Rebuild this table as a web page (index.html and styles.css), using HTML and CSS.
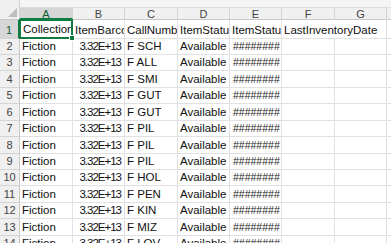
FILE: index.html
```html
<!DOCTYPE html>
<html>
<head>
<meta charset="utf-8">
<link rel="stylesheet" href="styles.css">
</head>
<body>
<div class="sheet">
  <div class="corner"><span class="tri"></span></div>
  <div class="strip"></div>
  <div class="colhead sel">A</div>
  <div class="colhead">B</div>
  <div class="colhead">C</div>
  <div class="colhead">D</div>
  <div class="colhead">E</div>
  <div class="colhead">F</div>
  <div class="colhead">G</div>
  <div class="colhead"></div>

  <div class="rowhead sel">1</div>
  <div class="cell active"><span class="clip">Collection</span><span class="handle"></span></div>
  <div class="cell">ItemBarcode</div>
  <div class="cell">CallNumber</div>
  <div class="cell">ItemStatus</div>
  <div class="cell">ItemStatusDate</div>
  <div class="cell spill">LastInventoryDate</div>
  <div class="cell"></div>
  <div class="cell"></div>

  <div class="rowhead">2</div><div class="cell">Fiction</div><div class="cell num">3.32E+13</div><div class="cell">F SCH</div><div class="cell">Available</div><div class="cell hash">########</div><div class="cell"></div><div class="cell"></div><div class="cell"></div>
  <div class="rowhead">3</div><div class="cell">Fiction</div><div class="cell num">3.32E+13</div><div class="cell">F ALL</div><div class="cell">Available</div><div class="cell hash">########</div><div class="cell"></div><div class="cell"></div><div class="cell"></div>
  <div class="rowhead">4</div><div class="cell">Fiction</div><div class="cell num">3.32E+13</div><div class="cell">F SMI</div><div class="cell">Available</div><div class="cell hash">########</div><div class="cell"></div><div class="cell"></div><div class="cell"></div>
  <div class="rowhead">5</div><div class="cell">Fiction</div><div class="cell num">3.32E+13</div><div class="cell">F GUT</div><div class="cell">Available</div><div class="cell hash">########</div><div class="cell"></div><div class="cell"></div><div class="cell"></div>
  <div class="rowhead">6</div><div class="cell">Fiction</div><div class="cell num">3.32E+13</div><div class="cell">F GUT</div><div class="cell">Available</div><div class="cell hash">########</div><div class="cell"></div><div class="cell"></div><div class="cell"></div>
  <div class="rowhead">7</div><div class="cell">Fiction</div><div class="cell num">3.32E+13</div><div class="cell">F PIL</div><div class="cell">Available</div><div class="cell hash">########</div><div class="cell"></div><div class="cell"></div><div class="cell"></div>
  <div class="rowhead">8</div><div class="cell">Fiction</div><div class="cell num">3.32E+13</div><div class="cell">F PIL</div><div class="cell">Available</div><div class="cell hash">########</div><div class="cell"></div><div class="cell"></div><div class="cell"></div>
  <div class="rowhead">9</div><div class="cell">Fiction</div><div class="cell num">3.32E+13</div><div class="cell">F PIL</div><div class="cell">Available</div><div class="cell hash">########</div><div class="cell"></div><div class="cell"></div><div class="cell"></div>
  <div class="rowhead">10</div><div class="cell">Fiction</div><div class="cell num">3.32E+13</div><div class="cell">F HOL</div><div class="cell">Available</div><div class="cell hash">########</div><div class="cell"></div><div class="cell"></div><div class="cell"></div>
  <div class="rowhead">11</div><div class="cell">Fiction</div><div class="cell num">3.32E+13</div><div class="cell">F PEN</div><div class="cell">Available</div><div class="cell hash">########</div><div class="cell"></div><div class="cell"></div><div class="cell"></div>
  <div class="rowhead">12</div><div class="cell">Fiction</div><div class="cell num">3.32E+13</div><div class="cell">F KIN</div><div class="cell">Available</div><div class="cell hash">########</div><div class="cell"></div><div class="cell"></div><div class="cell"></div>
  <div class="rowhead">13</div><div class="cell">Fiction</div><div class="cell num">3.32E+13</div><div class="cell">F MIZ</div><div class="cell">Available</div><div class="cell hash">########</div><div class="cell"></div><div class="cell"></div><div class="cell"></div>
  <div class="rowhead">14</div><div class="cell">Fiction</div><div class="cell num">3.32E+13</div><div class="cell">F LOV</div><div class="cell">Available</div><div class="cell hash">########</div><div class="cell"></div><div class="cell"></div><div class="cell"></div>
</div>
</body>
</html>
```

FILE: styles.css
```css
html, body {
  margin: 0;
  padding: 0;
  background: #ffffff;
  overflow: hidden;
}

.sheet {
  display: grid;
  grid-template-columns: 20px 53px 52px 53px 52px 52px 53px 52px 1fr;
  grid-template-rows: 8px 12px 18.5px repeat(13, 16.45px);
  width: 391px;
  height: 243px;
  overflow: hidden;
  font-family: "Liberation Sans", Arial, sans-serif;
  font-size: 11.5px;
  color: #111111;
}

.corner {
  grid-row: 1 / 3;
  grid-column: 1;
  background: #f0f0f0;
  border-right: 1px solid #d4d4d4;
  border-bottom: 1px solid #c8c8c8;
  position: relative;
}

.tri {
  position: absolute;
  right: 2px;
  bottom: 2px;
  width: 0;
  height: 0;
  border-left: 9px solid transparent;
  border-bottom: 9px solid #bdbdbd;
}

.strip {
  grid-column: 2 / -1;
  background: #f5f5f5;
  border-bottom: 1px solid #dcdcdc;
}

.colhead {
  background: #f0f0f0;
  border-right: 1px solid #d4d4d4;
  border-bottom: 1px solid #c8c8c8;
  box-sizing: border-box;
  text-align: center;
  font-size: 11px;
  line-height: 12px;
  color: #444444;
}

.colhead.sel {
  background: #d6d6d6;
  color: #0e5c2f;
  border-bottom: 2px solid #107c41;
}

.rowhead {
  background: #f0f0f0;
  border-right: 1px solid #c8c8c8;
  border-bottom: 1px solid #d4d4d4;
  box-sizing: border-box;
  font-size: 11px;
  line-height: 15px;
  color: #444444;
  display: flex;
  align-items: flex-end;
  justify-content: center;
}

.rowhead.sel {
  background: #d6d6d6;
  color: #0e5c2f;
  border-right: 2px solid #107c41;
}

.cell {
  box-sizing: border-box;
  border-right: 1px solid #e1e1e1;
  border-bottom: 1px solid #e1e1e1;
  padding: 0 2px;
  white-space: nowrap;
  overflow: hidden;
  line-height: 15px;
  display: flex;
  align-items: flex-end;
}

.cell.num {
  justify-content: flex-end;
  padding-right: 3px;
  letter-spacing: -1px;
}

.cell.hash {
  font-size: 10.5px;
  color: #222222;
  padding-left: 3px;
}

.cell.spill {
  overflow: visible;
  border-right-color: transparent;
  position: relative;
  z-index: 1;
}

.cell.active {
  position: relative;
  overflow: visible;
  border: 2px solid #107c41;
  margin-top: -1px;
  margin-left: -1px;
  padding-left: 2px;
  padding-right: 0;
  z-index: 2;
}

.clip {
  display: block;
  overflow: hidden;
  flex: 1;
  min-width: 0;
}

.handle {
  position: absolute;
  right: -4px;
  bottom: -4px;
  width: 4px;
  height: 4px;
  background: #107c41;
  border: 1px solid #ffffff;
}
```
